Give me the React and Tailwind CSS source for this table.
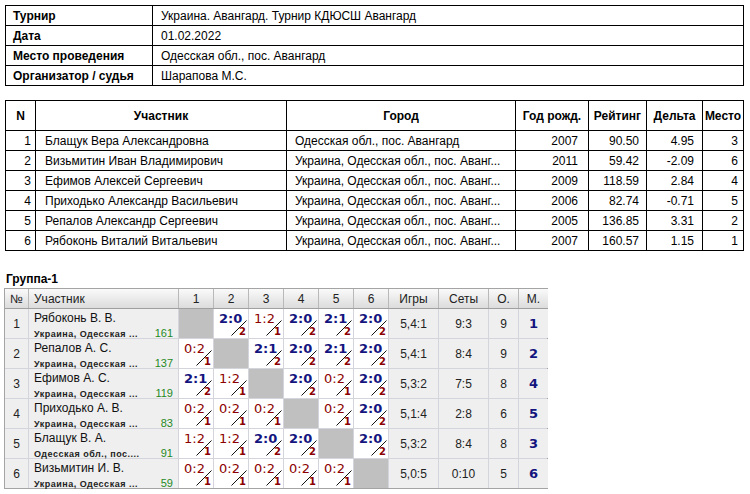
import React from "react";

const info = [
  ["Турнир", "Украина. Авангард. Турнир КДЮСШ Авангард"],
  ["Дата", "01.02.2022"],
  ["Место проведения", "Одесская обл., пос. Авангард"],
  ["Организатор / судья", "Шарапова М.С."],
];

const CITY = "Украина, Одесская обл., пос. Аванг...";

const players = [
  ["1", "Блащук Вера Александровна", "Одесская обл., пос. Авангард", "2007", "90.50", "4.95", "3"],
  ["2", "Визьмитин Иван Владимирович", CITY, "2011", "59.42", "-2.09", "6"],
  ["3", "Ефимов Алексей Сергеевич", CITY, "2009", "118.59", "2.84", "4"],
  ["4", "Приходько Александр Васильевич", CITY, "2006", "82.74", "-0.71", "5"],
  ["5", "Репалов Александр Сергеевич", CITY, "2005", "136.85", "3.31", "2"],
  ["6", "Рябоконь Виталий Витальевич", CITY, "2007", "160.57", "1.15", "1"],
];

// W = win, L = loss, null = diagonal
const group = [
  { n: "Рябоконь В. В.", c: "Украина, Одесская ...", r: "161", res: [null, "W2:0", "L1:2", "W2:0", "W2:1", "W2:0"], g: "5,4:1", s: "9:3", o: "9", m: "1" },
  { n: "Репалов А. С.", c: "Украина, Одесская ...", r: "137", res: ["L0:2", null, "W2:1", "W2:0", "W2:1", "W2:0"], g: "5,4:1", s: "8:4", o: "9", m: "2" },
  { n: "Ефимов А. С.", c: "Украина, Одесская ...", r: "119", res: ["W2:1", "L1:2", null, "W2:0", "L0:2", "W2:0"], g: "5,3:2", s: "7:5", o: "8", m: "4" },
  { n: "Приходько А. В.", c: "Украина, Одесская ...", r: "83", res: ["L0:2", "L0:2", "L0:2", null, "L0:2", "W2:0"], g: "5,1:4", s: "2:8", o: "6", m: "5" },
  { n: "Блащук В. А.", c: "Одесская обл., пос....", r: "91", res: ["L1:2", "L1:2", "W2:0", "W2:0", null, "W2:0"], g: "5,3:2", s: "8:4", o: "8", m: "3" },
  { n: "Визьмитин И. В.", c: "Украина, Одесская ...", r: "59", res: ["L0:2", "L0:2", "L0:2", "L0:2", "L0:2", null], g: "5,0:5", s: "0:10", o: "5", m: "6" },
];

const GCOLS = "grid grid-cols-[23px_149px_repeat(6,34px)_49px_49px_29px_29px] gap-px";

function ScoreCell({ v }) {
  if (!v) return <div className="bg-[#c0c0c0]" />;
  const win = v[0] === "W";
  return (
    <div className="relative bg-white">
      <div
        className={
          "pl-[5px] pt-[2px] text-[13px] leading-[15px] font-['DejaVu_Sans',sans-serif] " +
          (win ? "font-bold text-[#14147e]" : "text-[#8b0000]")
        }
      >
        {v.slice(1)}
      </div>
      <svg className="absolute left-[17px] top-[11px]" width="16" height="16" viewBox="0 0 16 16">
        <line x1="0.5" y1="15.5" x2="15.5" y2="0.5" stroke="#111" strokeWidth="1" />
      </svg>
      <span className="absolute right-[2px] bottom-[1px] text-[10px] leading-none font-bold text-[#8b0000] font-['DejaVu_Sans',sans-serif]">
        {win ? "2" : "1"}
      </span>
    </div>
  );
}

export default function App() {
  return (
    <div className="w-[750px] h-[494px] bg-white pt-[5px] font-['Liberation_Sans',Arial,sans-serif] text-[12px] text-black">
      {/* Tournament info */}
      <div className="ml-[5px] w-[739px] grid grid-cols-[146px_1fr] auto-rows-[19px] gap-px bg-black border border-black">
        {info.map(([k, v]) => (
          <React.Fragment key={k}>
            <div className="bg-white pl-[7px] font-bold flex items-center">{k}</div>
            <div className="bg-white pl-[8px] flex items-center">{v}</div>
          </React.Fragment>
        ))}
      </div>

      {/* Participants */}
      <div className="ml-[5px] mt-[14px] w-[739px] grid grid-cols-[29px_250px_228px_72px_57px_55px_40px] grid-rows-[29px_repeat(6,19px)] gap-px bg-black border border-black">
        {["N", "Участник", "Город", "Год рожд.", "Рейтинг", "Дельта", "Место"].map((h) => (
          <div key={h} className="bg-white font-bold flex items-center justify-center">{h}</div>
        ))}
        {players.map((p) => (
          <React.Fragment key={p[0]}>
            <div className="bg-white flex items-center justify-end pr-[4px]">{p[0]}</div>
            <div className="bg-white flex items-center pl-[9px]">{p[1]}</div>
            <div className="bg-white flex items-center pl-[8px]">{p[2]}</div>
            <div className="bg-white flex items-center justify-end pr-[10px]">{p[3]}</div>
            <div className="bg-white flex items-center justify-end pr-[7px]">{p[4]}</div>
            <div className="bg-white flex items-center justify-end pr-[8px]">{p[5]}</div>
            <div className="bg-white flex items-center justify-end pr-[5px]">{p[6]}</div>
          </React.Fragment>
        ))}
      </div>

      {/* Group */}
      <div className="mt-[21px] ml-[6px] font-bold leading-[14px]">Группа-1</div>
      <div className="ml-[4px] mt-[2px] w-[544px] border border-[#a4a4a4] bg-[#d4d4dc]">
        <div className={GCOLS + " h-[20px] bg-[#b9b9b9] border-b border-[#a0a0a0] text-[#222]"}>
          {["№", "Участник", "1", "2", "3", "4", "5", "6", "Игры", "Сеты", "О.", "М."].map((h) => (
            <div
              key={h}
              className={
                "bg-linear-to-b from-[#fafafa] to-[#dcdcdc] flex items-center " +
                (h === "Участник" ? "pl-[5px]" : "justify-center")
              }
            >
              {h}
            </div>
          ))}
        </div>
        <div className={GCOLS + " auto-rows-[29px]"}>
          {group.map((row, i) => (
            <React.Fragment key={i}>
              <div className="bg-[#efefef] flex items-center justify-center text-[#222]">{i + 1}</div>
              <div className="bg-[#efefef] px-[5px] flex flex-col">
                <span className="pt-[2px] leading-[14px] text-[#111]">{row.n}</span>
                <div className="mt-[2px] flex justify-between items-baseline leading-[12px]">
                  <span className="text-[9px] font-bold tracking-[0.5px] text-[#222]">{row.c}</span>
                  <span className="text-[11px] text-[#1f8a1f]">{row.r}</span>
                </div>
              </div>
              {row.res.map((v, j) => (
                <ScoreCell key={j} v={v} />
              ))}
              <div className="bg-[#efefef] flex items-center justify-center text-[12px] text-[#222]">{row.g}</div>
              <div className="bg-[#efefef] flex items-center justify-center text-[12px] text-[#222]">{row.s}</div>
              <div className="bg-[#efefef] flex items-center justify-center text-[12px] text-[#222]">{row.o}</div>
              <div className="bg-[#efefef] flex items-center justify-center text-[13px] font-bold text-[#14147e] font-['DejaVu_Sans',sans-serif]">
                {row.m}
              </div>
            </React.Fragment>
          ))}
        </div>
      </div>
    </div>
  );
}
